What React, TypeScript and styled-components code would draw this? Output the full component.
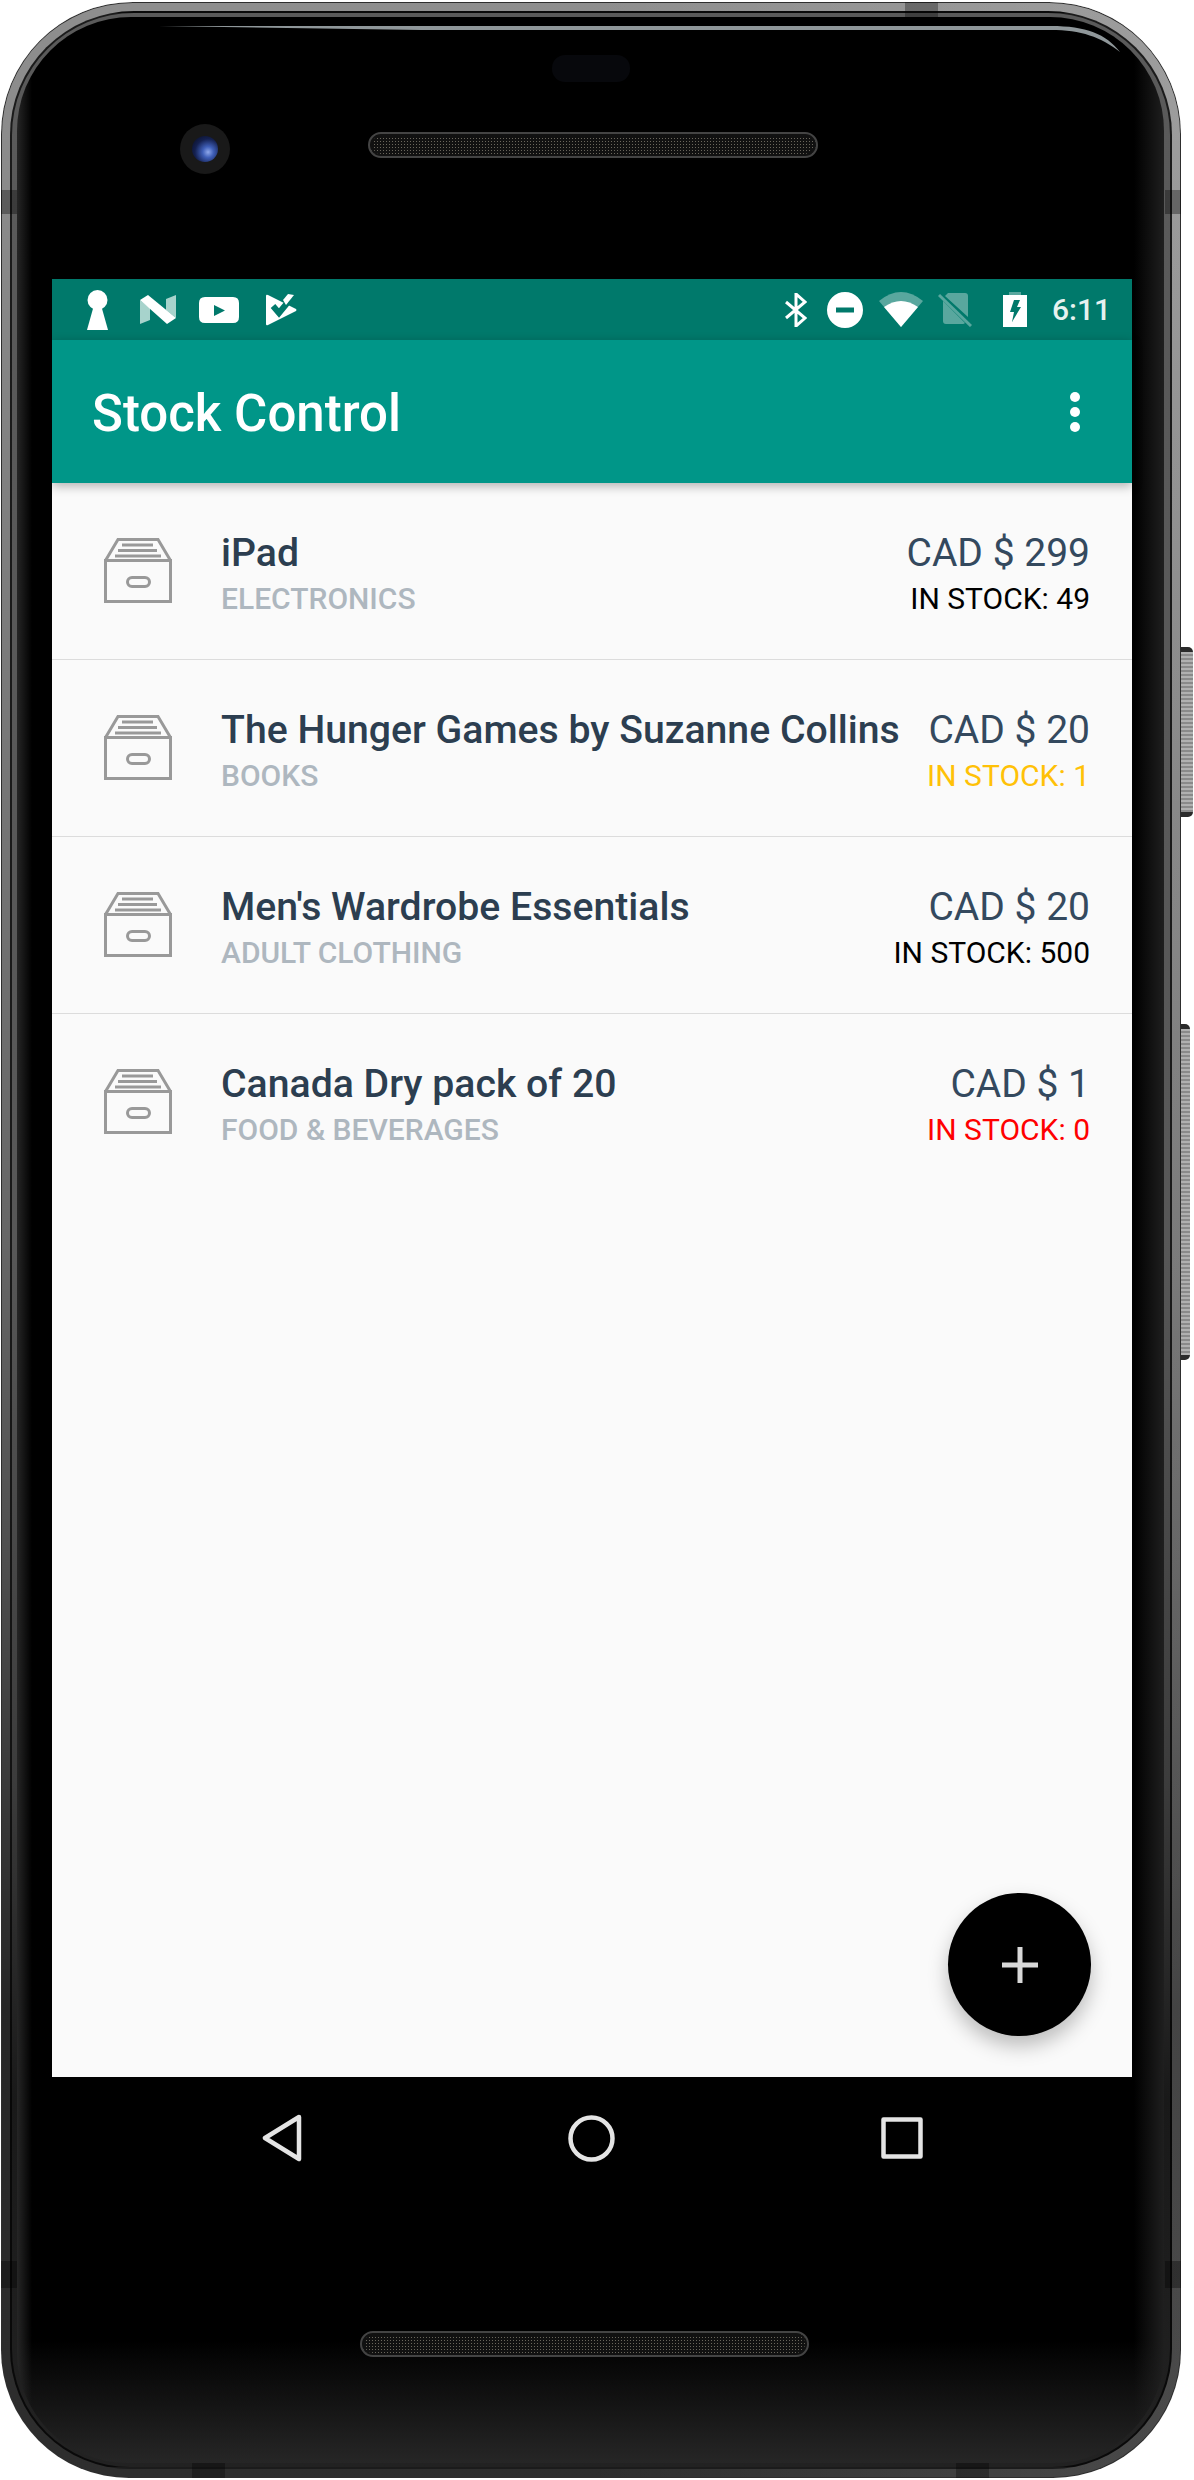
import React from 'react'
import styled, { createGlobalStyle } from 'styled-components'

type Tone = 'normal' | 'low' | 'out'

const items: { name: string; category: string; price: string; stock: number; tone: Tone }[] = [
  { name: 'iPad', category: 'ELECTRONICS', price: 'CAD $ 299', stock: 49, tone: 'normal' },
  { name: 'The Hunger Games by Suzanne Collins', category: 'BOOKS', price: 'CAD $ 20', stock: 1, tone: 'low' },
  { name: "Men's Wardrobe Essentials", category: 'ADULT CLOTHING', price: 'CAD $ 20', stock: 500, tone: 'normal' },
  { name: 'Canada Dry pack of 20', category: 'FOOD & BEVERAGES', price: 'CAD $ 1', stock: 0, tone: 'out' },
]

const toneColors: Record<Tone, string> = {
  normal: '#000000',
  low: '#ffc107',
  out: '#ff0000',
}

const GlobalStyle = createGlobalStyle`
  html, body {
    margin: 0;
    padding: 0;
    background: #ffffff;
    font-family: Roboto, "Liberation Sans", sans-serif;
  }
`

const Page = styled.div`
  width: 1194px;
  height: 2480px;
  padding: 2px 0 0 1px;
  box-sizing: border-box;
  overflow: hidden;
`

// Metal rim of the phone, the outer band
const Device = styled.div`
  position: relative;
  width: 1180px;
  height: 2476px;
  padding: 9px;
  box-sizing: border-box;
  border-radius: 132px 132px 128px 128px;
  background:
    linear-gradient(90deg, transparent 50%, rgba(255, 255, 255, 0.14) 100%),
    linear-gradient(180deg, #8e8e8e 0%, #8a8a8a 8%, #666666 50%, #505050 62%, #333333 75%, #262626 81%, #2e2e2e 100%);
  box-shadow: inset 0 0 0 1px #2e2e2e;
`

// Inner band, split from the outer one by a dark line
const RimInner = styled.div`
  height: 100%;
  padding: 4px 6px 4px 5px;
  box-sizing: border-box;
  border: 2px solid rgba(0, 0, 0, 0.7);
  border-radius: 124px 124px 120px 120px;
  background: linear-gradient(180deg, #5a5a5a 0%, #585858 50%, #3c3c3c 72%, #191919 85%, #222222 100%);
`

const SideButton = styled.div<{ $top: number; $height: number; $width: number }>`
  position: absolute;
  top: ${p => p.$top}px;
  left: 100%;
  width: ${p => p.$width}px;
  height: ${p => p.$height}px;
  border-radius: 0 5px 5px 0;
  background: repeating-linear-gradient(180deg, #b0b0b0 0, #b0b0b0 2px, #8a8a8a 2px, #8a8a8a 4px);
  border-top: 5px solid #2a2a2a;
  border-bottom: 5px solid #2a2a2a;
  box-sizing: border-box;
`

// Antenna bands cut across the rim
const RimBand = styled.div<{ $side: 'left' | 'right'; $top: number; $height: number }>`
  position: absolute;
  ${p => p.$side}: 0;
  top: ${p => p.$top}px;
  width: 16px;
  height: ${p => p.$height}px;
  background: rgba(0, 0, 0, 0.34);
`

const RimNotch = styled.div<{ $edge: 'top' | 'bottom'; $left: number }>`
  position: absolute;
  ${p => p.$edge}: 0;
  left: ${p => p.$left}px;
  width: 33px;
  height: 15px;
  background: rgba(0, 0, 0, 0.3);
`

const Highlight = styled.svg`
  position: absolute;
  left: 0;
  top: 0;
  width: 1180px;
  height: 80px;
`

const Bezel = styled.div`
  height: 100%;
  border-radius: 114px 114px 110px 110px;
  background:
    linear-gradient(90deg, rgba(42, 42, 42, 0.9) 0, transparent 15px, transparent calc(100% - 30px), rgba(34, 34, 34, 0.9) 100%),
    linear-gradient(180deg, #000 0%, #000 95%, #262626 100%);
  display: flex;
  flex-direction: column;
`

const TopBezel = styled.div`
  height: 262px;
  flex: none;
  padding-top: 38px;
  box-sizing: border-box;
  display: flex;
  flex-direction: column;
`

const Sensor = styled.div`
  width: 78px;
  height: 27px;
  margin-left: 535px;
  border-radius: 13px;
  background: #07080c;
`

const TopRow = styled.div`
  display: flex;
  align-items: flex-start;
  margin-top: 42px;
  padding-left: 163px;
`

const Camera = styled.div`
  width: 50px;
  height: 50px;
  flex: none;
  border-radius: 50%;
  display: flex;
  align-items: center;
  justify-content: center;
  background: #191919;
`

const Lens = styled.div`
  width: 26px;
  height: 26px;
  border-radius: 50%;
  background: radial-gradient(circle at 62% 62%, #8fa8ea 0, #3f5fb8 24%, #14204f 58%, #070a18 100%);
`

const Speaker = styled.div<{ $width: number; $offset: number; $drop: number }>`
  width: ${p => p.$width}px;
  height: 26px;
  margin: ${p => p.$drop}px 0 0 ${p => p.$offset}px;
  flex: none;
  box-sizing: border-box;
  border-radius: 13px;
  border: 2px solid #444444;
  background-color: #111;
  background-image: radial-gradient(circle, #6a665c 0.8px, transparent 1px);
  background-size: 3px 3px;
  box-shadow: inset 0 0 0 2px #111;
`

const Screen = styled.div`
  position: relative;
  width: 1080px;
  height: 1798px;
  flex: none;
  margin-left: 35px;
  background: #fafafa;
  display: flex;
  flex-direction: column;
`

const StatusBar = styled.div`
  height: 61px;
  flex: none;
  background: #00796b;
  display: flex;
  align-items: center;
  padding: 0 21px 0 35px;
`

const StatusIcon = styled.svg<{ $gap?: number }>`
  flex: none;
  margin-left: ${p => p.$gap ?? 0}px;
`

const Clock = styled.span`
  margin-left: 25px;
  font-size: 30px;
  line-height: 61px;
  font-weight: 500;
  color: #e6f2f0;
`

const Spacer = styled.div`
  flex: 1;
`

const AppBar = styled.div`
  height: 143px;
  flex: none;
  background: #009688;
  display: flex;
  align-items: center;
  justify-content: space-between;
  padding: 0 52px 0 40px;
  box-shadow: 0 3px 10px rgba(0, 0, 0, 0.3);
  position: relative;
  z-index: 1;
`

const Title = styled.h1`
  margin: 4px 0 0;
  font-size: 51px;
  font-weight: 500;
  color: #ffffff;
`

const Overflow = styled.div`
  display: flex;
  flex-direction: column;
  gap: 5px;
`

const Dot = styled.span`
  width: 10px;
  height: 10px;
  border-radius: 50%;
  background: #ffffff;
`

const List = styled.div`
  display: flex;
  flex-direction: column;
`

const Row = styled.div`
  height: 177px;
  box-sizing: border-box;
  display: flex;
  align-items: flex-start;
  padding: 46px 42px 0 52px;
  border-bottom: 1px solid #dcdcdc;
  &:last-child {
    border-bottom: none;
  }
`

const BoxIcon = styled.svg`
  width: 68px;
  height: 65px;
  flex: none;
  margin: 9px 49px 0 0;
`

const Info = styled.div`
  flex: 1;
  min-width: 0;
`

const Name = styled.div`
  font-size: 39.2px;
  line-height: 48px;
  font-weight: 500;
  color: #2c3e50;
  white-space: nowrap;
`

const Category = styled.div`
  margin-top: 4px;
  font-size: 30px;
  line-height: 36px;
  font-weight: 500;
  color: #aeb7bf;
  white-space: nowrap;
`

const Side = styled.div`
  text-align: right;
  flex: none;
`

const Price = styled.div`
  font-size: 39px;
  line-height: 48px;
  color: #34495e;
  white-space: nowrap;
`

const Stock = styled.div<{ $tone: Tone }>`
  margin-top: 4px;
  font-size: 30px;
  line-height: 36px;
  color: ${p => toneColors[p.$tone]};
  white-space: nowrap;
`

const Fab = styled.button`
  position: absolute;
  right: 41px;
  bottom: 41px;
  width: 143px;
  height: 143px;
  padding: 0;
  border: none;
  border-radius: 50%;
  background: #000000;
  box-shadow: 0 10px 20px rgba(0, 0, 0, 0.25);
  display: flex;
  align-items: center;
  justify-content: center;
`

const BottomBezel = styled.div`
  flex: 1;
  padding-top: 37px;
  box-sizing: border-box;
`

const NavRow = styled.div`
  height: 48px;
  display: flex;
  align-items: center;
  gap: 266px;
  padding-left: 245px;
`

const BottomSpeakerRow = styled.div`
  margin-top: 169px;
  padding-left: 343px;
  display: flex;
`

function ArchiveBox() {
  return (
    <BoxIcon viewBox="0 0 68 65" fill="none" stroke="#999999" strokeWidth={3}>
      <path d="M1.5 22.5 L14 1.5 H54 L66.5 22.5" />
      <rect x="1.5" y="22.5" width="65" height="41" />
      <rect x="23.5" y="39.5" width="22" height="9" rx="4.5" />
      <path d="M18 7 H49 M14 12.5 H53 M11 18 H57" />
    </BoxIcon>
  )
}

export default function App() {
  return (
    <Page>
      <GlobalStyle />
      <Device>
        <SideButton $top={645} $height={170} $width={12} />
        <SideButton $top={1022} $height={336} $width={9} />
        <RimBand $side="left" $top={188} $height={24} />
        <RimBand $side="right" $top={188} $height={24} />
        <RimBand $side="right" $top={2259} $height={27} />
        <RimBand $side="left" $top={2259} $height={27} />
        <RimNotch $edge="top" $left={904} />
        <RimNotch $edge="bottom" $left={191} />
        <RimNotch $edge="bottom" $left={955} />
        <RimInner>
          <Bezel>
            <TopBezel>
              <Sensor />
              <TopRow>
                <Camera>
                  <Lens />
                </Camera>
                <Speaker $width={450} $offset={138} $drop={8} />
              </TopRow>
            </TopBezel>
            <Screen>
              <StatusBar>
                <StatusIcon width="21" height="40" viewBox="0 0 21 40" fill="#fff">
                  <circle cx="10.5" cy="10" r="10" />
                  <path d="M7 15 H14 L21 40 H0 Z" />
                </StatusIcon>
                <StatusIcon $gap={32} width="37" height="29" viewBox="0 0 37 29">
                  <path d="M0 5 L10 13 V25 L0 29 Z M26 4 L36 0 V23 L26 15 Z" fill="#a7d3cc" />
                  <path d="M0 5 L8 0 L36 23 L27 29 Z" fill="#fff" />
                </StatusIcon>
                <StatusIcon $gap={22} width="40" height="26" viewBox="0 0 40 26">
                  <path
                    fillRule="evenodd"
                    d="M6 0 H34 Q40 0 40 6 V20 Q40 26 34 26 H6 Q0 26 0 20 V6 Q0 0 6 0 Z M15 8 V19 L26 13.5 Z"
                    fill="#fff"
                  />
                </StatusIcon>
                <StatusIcon $gap={27} width="31" height="32" viewBox="0 0 31 32">
                  <path d="M0 2 Q0 0 2 1 L30 15 Q31 16 30 17 L2 31 Q0 32 0 30 Z" fill="#fff" />
                  <path d="M7 12 L13 19 L27 2" fill="none" stroke="#00796b" strokeWidth="6" />
                  <path d="M20 11 L28 1 L22 0 L17 6 Z" fill="#fff" />
                </StatusIcon>
                <Spacer />
                <StatusIcon width="22" height="34" viewBox="0 0 22 34" fill="none" stroke="#fff" strokeWidth="3">
                  <path d="M1 9 L20 25 L11 33 V1 L20 9 L1 25" />
                </StatusIcon>
                <StatusIcon $gap={20} width="36" height="36" viewBox="0 0 36 36">
                  <path
                    fillRule="evenodd"
                    d="M18 0 A18 18 0 1 1 18 36 A18 18 0 1 1 18 0 Z M9 15.5 V20.5 H27 V15.5 Z"
                    fill="#fff"
                  />
                </StatusIcon>
                <StatusIcon $gap={16} width="44" height="35" viewBox="0 0 44 35">
                  <path d="M0 9 Q22 -9 44 9 L22 35 Z" fill="#fff" fillOpacity="0.35" />
                  <path d="M5 15 Q22 3 39 15 L22 35 Z" fill="#fff" />
                </StatusIcon>
                <StatusIcon $gap={15} width="34" height="34" viewBox="0 0 34 34" fill="#fff" fillOpacity="0.35">
                  <path d="M10 0 H27 Q30 0 30 3 V24 L7 3 Z M5 8 L27 30 Q26 31 25 31 H8 Q5 31 5 28 Z" />
                  <path d="M1 2 L33 33" stroke="#fff" strokeOpacity="0.35" strokeWidth="3" fill="none" />
                </StatusIcon>
                <StatusIcon $gap={31} width="24" height="35" viewBox="0 0 24 35">
                  <path d="M6 0 H18 V3 H6 Z" fill="#fff" fillOpacity="0.35" />
                  <path
                    fillRule="evenodd"
                    d="M0 3 H24 V35 H0 Z M11 8 L7 20 H11 L9 30 L18 15 H14 L17 8 Z"
                    fill="#fff"
                  />
                </StatusIcon>
                <Clock>6:11</Clock>
              </StatusBar>
              <AppBar>
                <Title>Stock Control</Title>
                <Overflow>
                  <Dot />
                  <Dot />
                  <Dot />
                </Overflow>
              </AppBar>
              <List>
                {items.map(item => (
                  <Row key={item.name}>
                    <ArchiveBox />
                    <Info>
                      <Name>{item.name}</Name>
                      <Category>{item.category}</Category>
                    </Info>
                    <Side>
                      <Price>{item.price}</Price>
                      <Stock $tone={item.tone}>IN STOCK: {item.stock}</Stock>
                    </Side>
                  </Row>
                ))}
              </List>
              <Fab>
                <svg width="36" height="36" viewBox="0 0 36 36" fill="#d8d8d8">
                  <rect x="15.5" y="0" width="5" height="36" />
                  <rect x="0" y="15.5" width="36" height="5" />
                </svg>
              </Fab>
            </Screen>
            <BottomBezel>
              <NavRow>
                <svg width="40" height="48" viewBox="0 0 40 48" fill="none" stroke="#e4e4e4" strokeWidth="4.5" strokeLinejoin="round">
                  <path d="M37 3 L3 24 L37 45 Z" />
                </svg>
                <svg width="47" height="47" viewBox="0 0 47 47" fill="none" stroke="#e4e4e4" strokeWidth="4.5">
                  <circle cx="23.5" cy="23.5" r="21" />
                </svg>
                <svg width="42" height="42" viewBox="0 0 42 42" fill="none" stroke="#e4e4e4" strokeWidth="4.5" strokeLinejoin="round">
                  <rect x="2.5" y="2.5" width="37" height="37" />
                </svg>
              </NavRow>
              <BottomSpeakerRow>
                <Speaker $width={449} $offset={0} $drop={0} />
              </BottomSpeakerRow>
            </BottomBezel>
          </Bezel>
        </RimInner>
        <Highlight viewBox="0 0 1180 80">
          <path d="M158 24 H1050 C1085 24 1105 32 1119 50 C1100 35 1080 28 1050 28 H420 Z" fill="#8f979a" />
        </Highlight>
      </Device>
    </Page>
  )
}
